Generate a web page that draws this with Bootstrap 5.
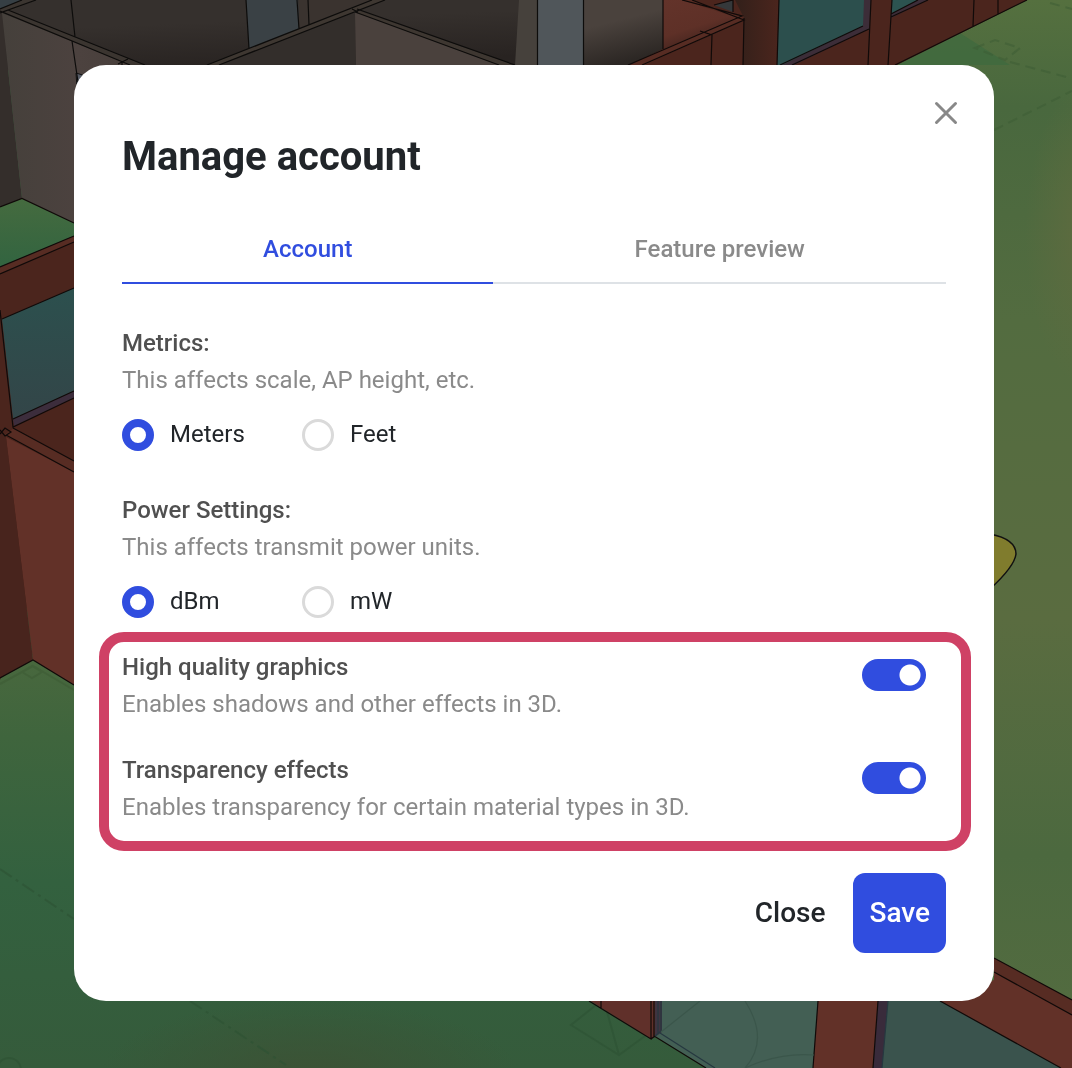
<!DOCTYPE html>
<html lang="en">
<head>
<meta charset="utf-8">
<meta name="viewport" content="width=device-width, initial-scale=1">
<title>Manage account</title>
<link rel="stylesheet" href="https://cdn.jsdelivr.net/npm/bootstrap@5.3.0/dist/css/bootstrap.min.css">
<style>
  :root { --brand: #304ddf; --ink: #212529; --heading: #505050; --soft: #8a8a8a; --callout: #cf4165; }
  body { font-family: Roboto, "Liberation Sans", sans-serif; font-size: 24px; line-height: 37px; color: var(--ink); background: #355c3b; }
  .scene { position: fixed; inset: 0; width: 100%; height: 100%; z-index: -1; }
  .stage { padding: 65px 4px 0 0; }
  .dialog-panel { max-width: 920px; border: 0; border-radius: 32px; }
  .dialog-head { padding: 32px 32px 0 48px; }
  .dialog-title { font-size: 40px; line-height: 48px; font-weight: 700; margin: 36px 0 0; }
  .x-btn { width: 32px; height: 32px; line-height: 1; border: 0; }
  .dialog-main { padding: 34px 48px 48px; }
  .tab-strip .nav-link { border: 0; border-bottom: 2px solid #dee2e6; border-radius: 0; padding: 16px 8px 15px; line-height: 36px; font-weight: 500; color: var(--soft); }
  .tab-strip .nav-link.active { color: var(--brand); border-color: var(--brand); background: none; }
  .setting { margin-top: 41px; }
  .setting-name { font-size: 24px; line-height: 37px; font-weight: 500; color: var(--heading); margin: 0; float: none; }
  .setting-note { color: var(--soft); margin: 0; }
  .choices { margin-top: 20px; }
  .choice { width: 180px; gap: 16px; }
  .choice label { line-height: 30px; }
  .choice .form-check-input { width: 32px; height: 32px; margin: 0; border: 3px solid #dadada; background-image: none; flex: none; }
  .choice .form-check-input:checked { border: 8px solid var(--brand); background: #fff; }
  .callout-box { margin: 14px -25px 0 -23px; padding: 7px 35px 15px 13px; border: 10px solid var(--callout); border-radius: 25px; gap: 29px; }
  .form-switch .form-check-input.toggle { width: 64px; height: 32px; margin: 10px 0 0; border: 0; flex: none; background-color: #dadada;
    background-image: radial-gradient(circle at 16px 16px, #fff 10px, transparent 11px); background-position: 0 0; }
  .form-switch .form-check-input.toggle:checked { background-color: var(--brand); background-image: radial-gradient(circle at 48px 16px, #fff 10px, transparent 11px); }
  .actions { margin-top: 22px; gap: 12px; }
  .action-btn { height: 80px; padding: 0 16px; border: 0; border-radius: 12px; font-size: 28px; font-weight: 500; color: var(--ink); }
  .action-btn.save { background: var(--brand); color: #fff; }
</style>
</head>
<body>
<svg class="scene" viewBox="0 0 1072 1068" preserveAspectRatio="xMidYMid slice" aria-hidden="true">
  <defs>
    <linearGradient id="floorRight" x1="0" y1="0" x2="0" y2="1"><stop offset="0" stop-color="#55703f"/><stop offset=".1" stop-color="#49683e"/><stop offset=".3" stop-color="#536c40"/><stop offset=".58" stop-color="#5a6c40"/><stop offset=".8" stop-color="#4c693f"/><stop offset="1" stop-color="#556c40"/></linearGradient>
    <linearGradient id="floorLeft" x1="0" y1="0" x2="0" y2="1"><stop offset="0" stop-color="#49683e"/><stop offset=".2" stop-color="#3f653d"/><stop offset=".55" stop-color="#33613f"/><stop offset="1" stop-color="#355b3b"/></linearGradient>
    <linearGradient id="floorNook" x1="0" y1="0" x2="0" y2="1"><stop offset="0" stop-color="#456b3f"/><stop offset="1" stop-color="#326440"/></linearGradient>
    <linearGradient id="glass" x1="0" y1="0" x2="0" y2="1"><stop offset="0" stop-color="#2c504e"/><stop offset="1" stop-color="#334548"/></linearGradient>
    <linearGradient id="wallLeft"><stop offset="0" stop-color="#45403b"/><stop offset=".6" stop-color="#4c423f"/><stop offset="1" stop-color="#483f3b"/></linearGradient>
    <linearGradient id="shade" x1="0" y1="0" x2=".3" y2="1"><stop offset=".4" stop-color="#35302d"/><stop offset="1" stop-color="#282321"/></linearGradient>
    <linearGradient id="redShade" x1="0" y1="0" x2=".5" y2="1"><stop offset="0" stop-color="#63332a"/><stop offset=".6" stop-color="#5e3027"/><stop offset="1" stop-color="#3d211c"/></linearGradient>
    <linearGradient id="redDark"><stop offset="0" stop-color="#32201a"/><stop offset="1" stop-color="#4b251d"/></linearGradient>
    <linearGradient id="greyShade" x1="0" y1="0" x2=".3" y2="1"><stop offset=".4" stop-color="#4a423d"/><stop offset="1" stop-color="#2c2724"/></linearGradient>
    <radialGradient id="earth"><stop offset="0" stop-color="#3c5235"/><stop offset="1" stop-color="#3c5235" stop-opacity="0"/></radialGradient>
    <radialGradient id="warm"><stop offset="0" stop-color="#5e6b3f"/><stop offset="1" stop-color="#5e6b3f" stop-opacity="0"/></radialGradient>
  </defs>

  <!-- floors -->
  <path d="M880 0H1072V1068H880z" fill="url(#floorRight)"/>
  <ellipse cx="1085" cy="235" rx="60" ry="150" fill="url(#warm)"/>
  <path d="M895 65L960 33L1010 65z" fill="#3d693e" opacity=".7"/>
  <path d="M0 655H700V1068H0z" fill="url(#floorLeft)"/>
  <ellipse cx="310" cy="1075" rx="210" ry="75" fill="url(#earth)"/>
  <g fill="none" stroke="#2d5233" stroke-width="2" opacity=".6">
    <path d="M0 869L74 919M190 1001L286 1065" stroke-dasharray="14 5 3 5"/>
    <path d="M0 684L33 666L74 690M22 672l10 6 10-6-10-6z" stroke="#3d5b36"/>
    <path d="M601 1001L571 1025L619 1055L645 1036M606 1008L619 1055"/>
    <circle cx="9" cy="1070" r="12"/>
  </g>
  <path d="M994 130L1072 91M975 48l20-8 25 8-15 12zM1010 62l60 16M1050 3l22 6" fill="none" stroke="#3b5c33" stroke-width="2" stroke-dasharray="10 6" opacity=".5"/>

  <!-- grey rooms along the top -->
  <path d="M0 0H540V70H0z" fill="url(#shade)"/>
  <path d="M0 0H22L0 9z" fill="#363f44"/>
  <path d="M0 9L22 0H36L10 11L145 65V70H130L0 12z" fill="#3b3530"/>
  <path d="M0 14L2 13L22 199L0 207z" fill="#342e2b"/>
  <path d="M2 13L130 65L74 110V224L22 199z" fill="url(#wallLeft)"/>
  <path d="M76 73l10 3-9 12z" fill="#565b65" stroke="#111"/>
  <path d="M246 0H298L299 29L249 49z" fill="#3a4145"/>
  <path d="M299 0H372L299 29z" fill="#3a332f"/>
  <path d="M207 65L372 0H385L357 10L515 65H499L355 12L219 65z" fill="#3e3731"/>
  <path d="M219 65L355 12L356 65z" fill="#332e2b"/>
  <path d="M355 12L499 65H356z" fill="#4a413d"/>
  <path d="M519 0H537V65H515z" fill="#46413c"/>
  <path d="M537 0H584V66H537z" fill="#50565a"/>
  <path d="M584 0H663V66H584z" fill="url(#greyShade)"/>
  <g fill="none" stroke="#0d0c0b" stroke-width="1.2">
    <path d="M0 9L22 0M0 13L36 0M8 10L145 65M0 11L130 65M71 0L75 37M72 41L78 82M118 64L128 59M122 61v5"/>
    <path d="M207 65L372 0M219 65L385 0M246 0L249 49M297 0L299 29M308 0L309 25M352 9L358 12M357 9L515 65M355 12L499 65M537.500 0V65M583.500 0V65"/>
  </g>

  <!-- brick walls, upper right -->
  <path d="M663 0H1027L895 66H628L663 49z" fill="#4b251d"/>
  <path d="M663 0H682L740 17L663 49z" fill="url(#redShade)"/>
  <path d="M663 49L740 17L744 20L642 66H628z" fill="#572c23"/>
  <path d="M682 0H692L744 18L738 18z" fill="#572c23"/>
  <path d="M714 5L733 0V12z" fill="#35383a"/>
  <path d="M744 18L735 0H779V66H743z" fill="url(#redDark)"/>
  <path d="M779 0H867V28L785 66H777z" fill="#2c4f4d"/>
  <path d="M864 0H871L869 29L792 66H780L863 26z" fill="#3c2d38"/>
  <path d="M892 0H918L891 14z" fill="#2c5350"/>
  <path d="M918 0H928L891 18V14z" fill="#3c2d38"/>
  <g fill="none" stroke="#100a09" stroke-width="1.200">
    <path d="M663 0V49M628 65L742 16L682 0M642 65L744 20L692 0M744 18L743 65M700 31l12 4-1 30M714 5L733 0V12M779 0L777 65M780 65L863 26M792 65L869 29M871 0L868 65M892 0L888 65M891 17L928 0M891 14L918 0M974 0L973 26M998 0V14M895 65L1027 0"/>
  </g>

  <!-- brick rooms, left -->
  <path d="M0 207L22 198.500L74 223V236L0 267z" fill="url(#floorNook)"/>
  <path d="M0 267L74 236V480L0 680z" fill="#4b251d"/>
  <path d="M0 267L74 236V242L0 274z" fill="#572c23"/>
  <path d="M2 319L74 288V391L13 419z" fill="url(#glass)"/>
  <path d="M13 419L74 391V398L14 426z" fill="#3c2d3c"/>
  <path d="M14 428L74 461V472L4 435z" fill="#572c23"/>
  <path d="M6 437L74 472V685L33 660z" fill="#623128"/>
  <path d="M0 432L6 437L33 660L0 678z" fill="#48241d"/>
  <g fill="none" stroke="#100a09" stroke-width="1.200">
    <path d="M0 207L22 198.500L74 223M0 267L74 236M0 274L74 242M2 319L74 288M0 310L13 427L74 398M13 419L74 391M13 428L74 461M0 430l5 6 6-4-6-4-5 6M6 435L74 472M0 678L33 660L74 685"/>
  </g>

  <!-- lower right corner -->
  <path d="M589 1000H655V1037L651 1039z" fill="#60302a"/>
  <path d="M661 1000H940L1061 1068H706L655 1036z" fill="#435f54"/>
  <path d="M884 1000H940L1061 1068H880z" fill="#3a534d"/>
  <path d="M655 1000H662V1032L655 1037z" fill="#403440"/>
  <path d="M818 1000H878L873 1068H813z" fill="#623128"/>
  <path d="M878 1000H888L882 1068H873z" fill="#392b3b"/>
  <path d="M994 958L1072 1000V1068H1061L938 1000L994 980z" fill="#623128"/>
  <path d="M994 958L1072 1000V1015L994 972z" fill="#572c23"/>
  <g fill="none" stroke="#100a09" stroke-width="1.200">
    <path d="M589 1001L651 1039V1001M601 1001V1008M651 1039L655 1036M654 1001V1036L706 1068M818 1001L813 1068M878 1001L873 1068M940 1001L1061 1068M994 958L1072 1000M994 972L1072 1015"/>
    <path d="M658 1001V1033M661 1001V1031L655 1036M660 1033L715 1068M888 1001L882 1068" stroke="#263840"/>
    <path d="M745 1001Q770 1040 745 1068M700 1001L661 1032M745 1068Q780 1052 814 1055" stroke="#3b564b"/>
  </g>
  <path d="M990 534C1010 538 1016 545 1016 554C1015 563 1003 577 990 589z" fill="#807c2d" stroke="#111" stroke-width="1.500"/>
</svg>

<main class="stage">
  <section class="modal-content dialog-panel mx-auto bg-white" role="dialog" aria-labelledby="dialogTitle">
    <header class="dialog-head d-flex justify-content-between align-items-start">
      <h1 class="dialog-title" id="dialogTitle">Manage account</h1>
      <button type="button" class="btn x-btn p-0 d-flex align-items-center justify-content-center" aria-label="Close dialog">
        <svg width="24" height="24" viewBox="0 0 24 24" fill="none" stroke="#888" stroke-width="3" stroke-linecap="round"><path d="M2.500 2.500L21.500 21.500M21.500 2.500L2.500 21.500"/></svg>
      </button>
    </header>
    <form class="dialog-main">
      <nav class="nav nav-fill tab-strip">
        <a class="nav-link active" aria-current="page" href="#account">Account</a>
        <a class="nav-link" href="#preview">Feature preview</a>
      </nav>

      <div class="setting" role="radiogroup" aria-labelledby="metricsName">
        <h2 class="setting-name" id="metricsName">Metrics:</h2>
        <p class="setting-note">This affects scale, AP height, etc.</p>
        <div class="choices d-flex">
          <div class="choice d-flex align-items-start">
            <input class="form-check-input" type="radio" name="metrics" id="meters" checked>
            <label for="meters">Meters</label>
          </div>
          <div class="choice d-flex align-items-start">
            <input class="form-check-input" type="radio" name="metrics" id="feet">
            <label for="feet">Feet</label>
          </div>
        </div>
      </div>

      <div class="setting" role="radiogroup" aria-labelledby="powerName">
        <h2 class="setting-name" id="powerName">Power Settings:</h2>
        <p class="setting-note">This affects transmit power units.</p>
        <div class="choices d-flex">
          <div class="choice d-flex align-items-start">
            <input class="form-check-input" type="radio" name="power" id="dbm" checked>
            <label for="dbm">dBm</label>
          </div>
          <div class="choice d-flex align-items-start">
            <input class="form-check-input" type="radio" name="power" id="mw">
            <label for="mw">mW</label>
          </div>
        </div>
      </div>

      <div class="callout-box d-flex flex-column">
        <div class="form-switch p-0 d-flex justify-content-between align-items-start">
          <div>
            <label class="setting-name d-block" for="quality">High quality graphics</label>
            <p class="setting-note">Enables shadows and other effects in 3D.</p>
          </div>
          <input class="form-check-input toggle" type="checkbox" role="switch" id="quality" checked>
        </div>
        <div class="form-switch p-0 d-flex justify-content-between align-items-start">
          <div>
            <label class="setting-name d-block" for="transparency">Transparency effects</label>
            <p class="setting-note">Enables transparency for certain material types in 3D.</p>
          </div>
          <input class="form-check-input toggle" type="checkbox" role="switch" id="transparency" checked>
        </div>
      </div>

      <div class="actions d-flex justify-content-end">
        <button type="button" class="btn action-btn">Close</button>
        <button type="submit" class="btn action-btn save">Save</button>
      </div>
    </form>
  </section>
</main>
<script src="https://cdn.jsdelivr.net/npm/bootstrap@5.3.0/dist/js/bootstrap.bundle.min.js"></script>
</body>
</html>
